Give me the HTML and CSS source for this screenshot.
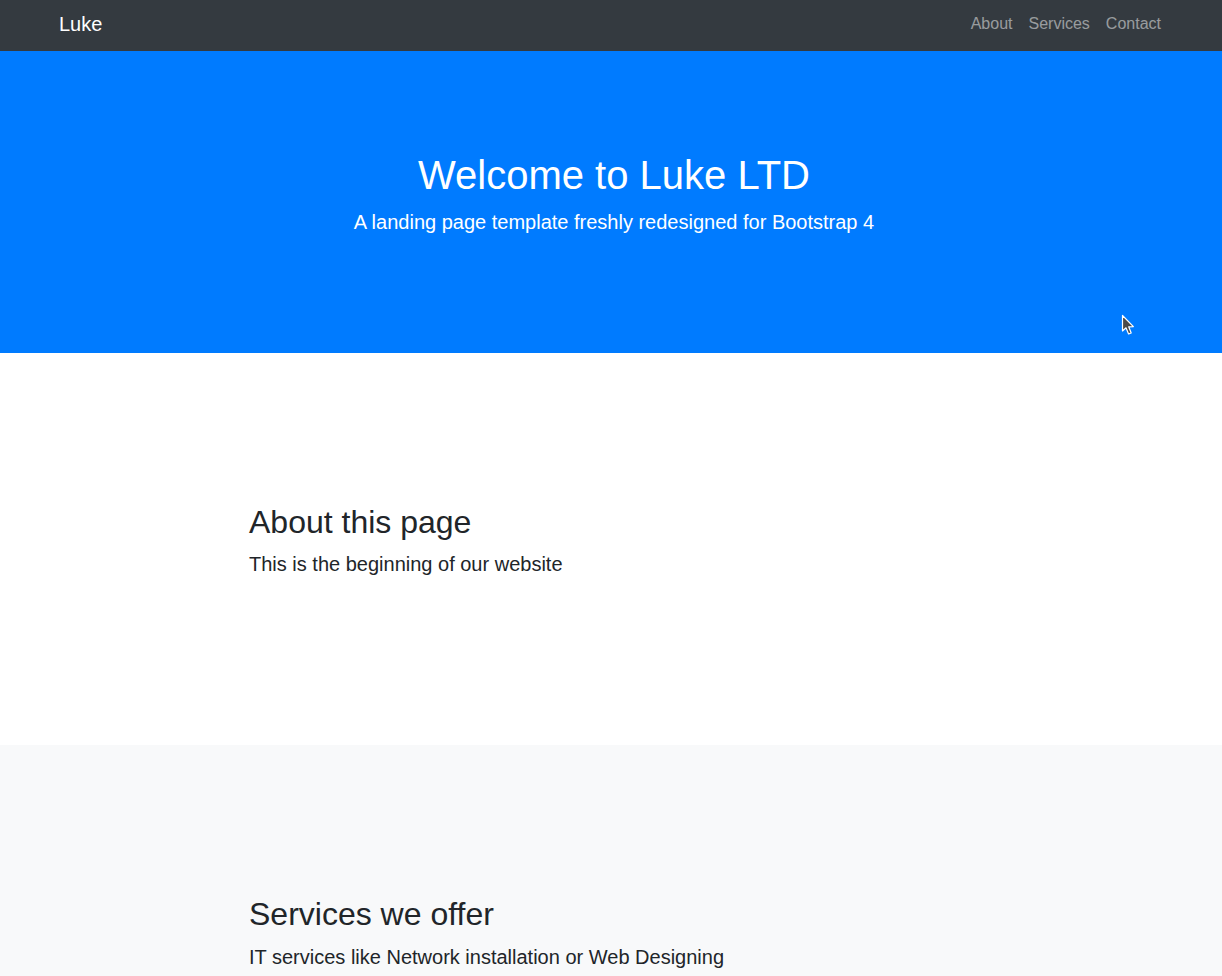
FILE: index.html
```html
<!DOCTYPE html>
<html lang="en">
<head>
<meta charset="utf-8">
<title>Luke LTD</title>
<link rel="stylesheet" href="styles.css">
</head>
<body>
<nav class="navbar">
  <div class="nav-container">
    <a class="brand" href="#">Luke</a>
    <ul class="nav-links">
      <li><a href="#about">About</a></li>
      <li><a href="#services">Services</a></li>
      <li><a href="#contact">Contact</a></li>
    </ul>
  </div>
</nav>
<header class="hero">
  <h1 class="hero-title">Welcome to Luke LTD</h1>
  <p class="lead">A landing page template freshly redesigned for Bootstrap 4</p>
  <svg class="cursor" width="16" height="24" viewBox="0 0 16 24" aria-hidden="true">
    <path d="M1.5 1.5 L1.5 17 L5 13.8 L7.6 20 L10.2 18.9 L7.7 12.8 L12.4 12.6 Z" fill="#4a4a4a" stroke="#ffffff" stroke-width="1.2" stroke-linejoin="round"/>
  </svg>
</header>
<section class="section" id="about">
  <div class="content">
    <h2 class="section-title">About this page</h2>
    <p class="lead">This is the beginning of our website</p>
  </div>
</section>
<section class="section section-light" id="services">
  <div class="content">
    <h2 class="section-title">Services we offer</h2>
    <p class="lead">IT services like Network installation or Web Designing</p>
  </div>
</section>
</body>
</html>
```
FILE: styles.css
```css
* { box-sizing: border-box; }
html, body { margin: 0; padding: 0; }
body {
  font-family: "Liberation Sans", Arial, sans-serif;
  font-size: 16px;
  line-height: 1.5;
  color: #212529;
  background: #fff;
}
.navbar {
  background: #343a40;
  height: 51px;
  padding-top: 1px;
}
.nav-container {
  height: 45px;
  display: flex;
  align-items: center;
  justify-content: space-between;
  padding: 0 53px 0 59px;
}
.brand {
  color: #fff;
  font-size: 20px;
  line-height: 30px;
  text-decoration: none;
}
.nav-links {
  list-style: none;
  margin: 0;
  padding: 0;
  display: flex;
}
.nav-links a {
  display: block;
  padding: 8px;
  color: rgba(255,255,255,.5);
  text-decoration: none;
  line-height: 24px;
}
.hero {
  position: relative;
  background: #007bff;
  color: #fff;
  text-align: center;
  padding: 100px 0 100px 6px;
}
.hero-title {
  margin: 0 0 8px;
  font-size: 40px;
  font-weight: 500;
  line-height: 1.2;
}
.lead {
  margin: 0 0 16px;
  font-size: 20px;
  font-weight: 300;
  line-height: 1.5;
}
.cursor {
  position: absolute;
  left: 1121px;
  top: 263px;
}
.section {
  padding: 150px 0;
}
.section-light {
  background: #f8f9fa;
}
.content {
  width: 730px;
  margin: 0 auto;
  padding-right: 6px;
  transform: translateX(3px);
}
.section-title {
  margin: 0 0 8px;
  font-size: 32px;
  font-weight: 500;
  line-height: 1.2;
}
```
